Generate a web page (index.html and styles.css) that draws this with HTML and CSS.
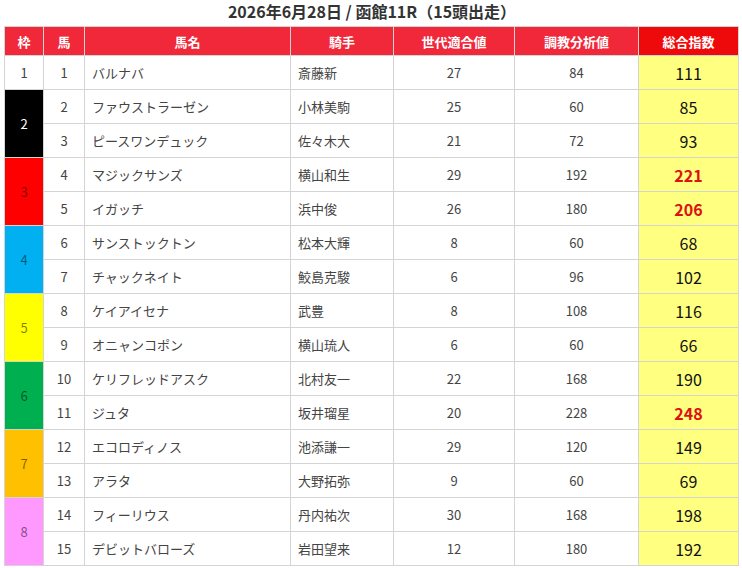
FILE: index.html
```html
<!DOCTYPE html>
<html lang="ja">
<head>
<meta charset="utf-8">
<link rel="stylesheet" href="styles.css">
</head>
<body>
<div class="wrap">
<h1 class="title">2026年6月28日 / 函館11R（15頭出走）</h1>
<table class="race">
<colgroup>
<col class="c-waku"><col class="c-uma"><col class="c-name"><col class="c-jockey"><col class="c-gen"><col class="c-train"><col class="c-total">
</colgroup>
<thead>
<tr><th>枠</th><th>馬</th><th>馬名</th><th>騎手</th><th>世代適合値</th><th>調教分析値</th><th class="th-total">総合指数</th></tr>
</thead>
<tbody>
<tr><td class="waku w1">1</td><td class="num">1</td><td class="txt">バルナバ</td><td class="txt">斎藤新</td><td class="num">27</td><td class="num">84</td><td class="total">111</td></tr>
<tr><td class="waku w2" rowspan="2">2</td><td class="num">2</td><td class="txt">ファウストラーゼン</td><td class="txt">小林美駒</td><td class="num">25</td><td class="num">60</td><td class="total">85</td></tr>
<tr><td class="num">3</td><td class="txt">ピースワンデュック</td><td class="txt">佐々木大</td><td class="num">21</td><td class="num">72</td><td class="total">93</td></tr>
<tr><td class="waku w3" rowspan="2">3</td><td class="num">4</td><td class="txt">マジックサンズ</td><td class="txt">横山和生</td><td class="num">29</td><td class="num">192</td><td class="total hi">221</td></tr>
<tr><td class="num">5</td><td class="txt">イガッチ</td><td class="txt">浜中俊</td><td class="num">26</td><td class="num">180</td><td class="total hi">206</td></tr>
<tr><td class="waku w4" rowspan="2">4</td><td class="num">6</td><td class="txt">サンストックトン</td><td class="txt">松本大輝</td><td class="num">8</td><td class="num">60</td><td class="total">68</td></tr>
<tr><td class="num">7</td><td class="txt">チャックネイト</td><td class="txt">鮫島克駿</td><td class="num">6</td><td class="num">96</td><td class="total">102</td></tr>
<tr><td class="waku w5" rowspan="2">5</td><td class="num">8</td><td class="txt">ケイアイセナ</td><td class="txt">武豊</td><td class="num">8</td><td class="num">108</td><td class="total">116</td></tr>
<tr><td class="num">9</td><td class="txt">オニャンコポン</td><td class="txt">横山琉人</td><td class="num">6</td><td class="num">60</td><td class="total">66</td></tr>
<tr><td class="waku w6" rowspan="2">6</td><td class="num">10</td><td class="txt">ケリフレッドアスク</td><td class="txt">北村友一</td><td class="num">22</td><td class="num">168</td><td class="total">190</td></tr>
<tr><td class="num">11</td><td class="txt">ジュタ</td><td class="txt">坂井瑠星</td><td class="num">20</td><td class="num">228</td><td class="total hi">248</td></tr>
<tr><td class="waku w7" rowspan="2">7</td><td class="num">12</td><td class="txt">エコロディノス</td><td class="txt">池添謙一</td><td class="num">29</td><td class="num">120</td><td class="total">149</td></tr>
<tr><td class="num">13</td><td class="txt">アラタ</td><td class="txt">大野拓弥</td><td class="num">9</td><td class="num">60</td><td class="total">69</td></tr>
<tr><td class="waku w8" rowspan="2">8</td><td class="num">14</td><td class="txt">フィーリウス</td><td class="txt">丹内祐次</td><td class="num">30</td><td class="num">168</td><td class="total">198</td></tr>
<tr><td class="num">15</td><td class="txt">デビットバローズ</td><td class="txt">岩田望来</td><td class="num">12</td><td class="num">180</td><td class="total">192</td></tr>
</tbody>
</table>
</div>
</body>
</html>
```
FILE: styles.css
```css
html, body {
  margin: 0;
  padding: 0;
  background: #ffffff;
}
body {
  font-family: "Noto Sans CJK JP", "Noto Sans", sans-serif;
  color: #333333;
}
.wrap {
  padding: 0 4px;
}
.title {
  margin: 0;
  height: 26px;
  line-height: 22px;
  font-size: 16px;
  font-weight: bold;
  text-align: center;
  color: #333333;
  padding-left: 2px;
}
.race {
  width: 734px;
  border-collapse: collapse;
  table-layout: fixed;
}
.c-waku { width: 39px; }
.c-uma { width: 41px; }
.c-name { width: 206px; }
.c-jockey { width: 103px; }
.c-gen { width: 121px; }
.c-train { width: 124px; }
.c-total { width: 100px; }
.race th {
  height: 28px;
  padding: 0;
  background: #f0283a;
  color: #ffffff;
  font-size: 13px;
  font-weight: bold;
  border: 1px solid #d4d4d4;
  text-align: center;
}
.race th.th-total {
  background: #ee0a0a;
}
.race td {
  height: 33px;
  padding: 0;
  border: 1px solid #d4d4d4;
  font-size: 13px;
  color: #444444;
}
.race td.num {
  text-align: center;
}
.race td.txt {
  text-align: left;
  padding-left: 7px;
}
.race td.total {
  background: #ffff80;
  text-align: center;
  font-size: 16px;
  color: #111111;
}
.race td.total.hi {
  color: #dd1111;
  font-weight: bold;
}
.race td.waku {
  text-align: center;
  font-size: 13px;
  color: rgba(0, 0, 0, 0.5);
}
.w1 { background: #ffffff; }
.race td.waku.w1 { color: #444444; }
.w2 { background: #000000; }
.race td.waku.w2 { color: #ffffff; }
.w3 { background: #ff0000; }
.w4 { background: #00b0f0; }
.w5 { background: #ffff00; }
.w6 { background: #00b050; }
.w7 { background: #ffc000; }
.w8 { background: #ff99ff; }
```
